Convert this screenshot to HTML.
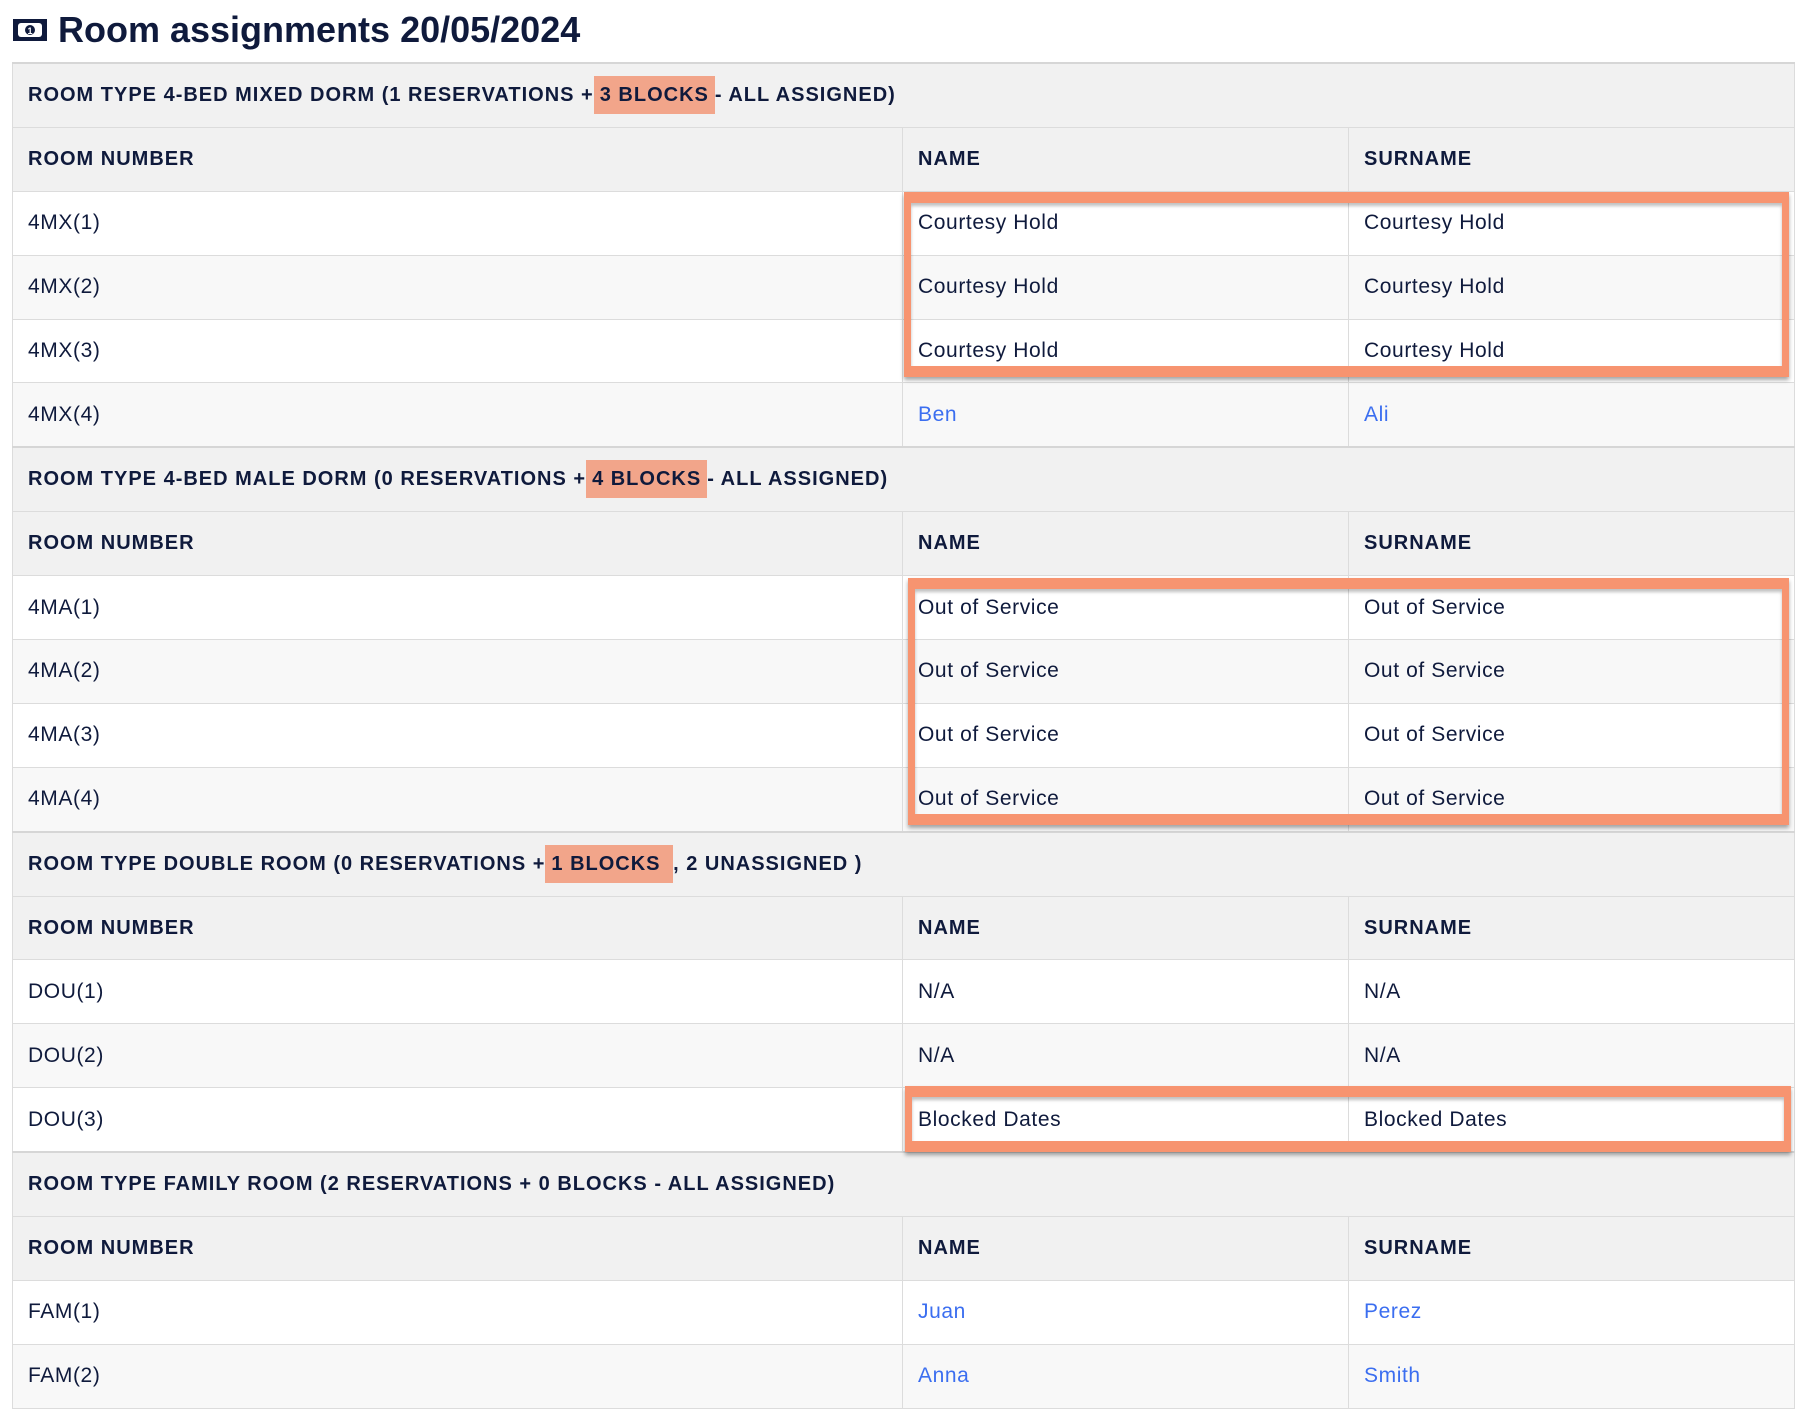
<!DOCTYPE html>
<html><head><meta charset="utf-8"><style>
body{margin:0;background:#fff;width:1806px;height:1420px;overflow:hidden;font-family:"Liberation Sans",sans-serif;color:#0f1a3c;position:relative}
h1{position:absolute;left:12px;top:8px;margin:0;font-size:36px;font-weight:bold;line-height:44px;display:flex;align-items:center;gap:10px}
table{position:absolute;left:12px;top:62px;width:1782px;border-collapse:collapse;table-layout:fixed}
td{height:62.9px;border:1px solid #dcdcdc;padding:0 0 0 15px;font-size:21px;letter-spacing:0.6px;vertical-align:middle}
tr.t td{background:#f1f1f1;font-weight:bold;font-size:20px;letter-spacing:1px;border-top:2px solid #d6d6d6}
tr.h td{background:#f1f1f1;font-weight:bold;font-size:20px;letter-spacing:1px}
tr.o td{background:#fff}tr.e td{background:#f8f8f8}
.hl{background:#f2a58a;padding:8px 6px}
a{color:#3b6ef0;text-decoration:none}
.box{position:absolute;border:solid #f79470;border-width:11px 7px 11px 7px;box-shadow:0 3px 4px rgba(0,0,0,.35),inset 0 3px 3px rgba(0,0,0,.25)}
</style></head><body>
<h1><svg width="36" height="26" viewBox="0 0 36 26"><rect x="1" y="2" width="34" height="22" fill="#0f1a3c"/><rect x="6" y="6" width="24" height="14" rx="3" fill="#fff"/><circle cx="18" cy="13" r="5" fill="#0f1a3c"/><text x="18" y="17" font-size="9" fill="#fff" text-anchor="middle" font-family="Liberation Sans" font-weight="bold">1</text></svg>Room assignments 20/05/2024</h1>
<table>
<colgroup><col style="width:890px"><col style="width:446px"><col style="width:446px"></colgroup>
<tr class="t"><td colspan="3">ROOM TYPE 4-BED MIXED DORM (1 RESERVATIONS +<span class="hl">3 BLOCKS</span>- ALL ASSIGNED)</td></tr>
<tr class="h"><td>ROOM NUMBER</td><td>NAME</td><td>SURNAME</td></tr>
<tr class="o"><td>4MX(1)</td><td>Courtesy Hold</td><td>Courtesy Hold</td></tr>
<tr class="e"><td>4MX(2)</td><td>Courtesy Hold</td><td>Courtesy Hold</td></tr>
<tr class="o"><td>4MX(3)</td><td>Courtesy Hold</td><td>Courtesy Hold</td></tr>
<tr class="e"><td>4MX(4)</td><td><a>Ben</a></td><td><a>Ali</a></td></tr>
<tr class="t"><td colspan="3">ROOM TYPE 4-BED MALE DORM (0 RESERVATIONS +<span class="hl">4 BLOCKS</span>- ALL ASSIGNED)</td></tr>
<tr class="h"><td>ROOM NUMBER</td><td>NAME</td><td>SURNAME</td></tr>
<tr class="o"><td>4MA(1)</td><td>Out of Service</td><td>Out of Service</td></tr>
<tr class="e"><td>4MA(2)</td><td>Out of Service</td><td>Out of Service</td></tr>
<tr class="o"><td>4MA(3)</td><td>Out of Service</td><td>Out of Service</td></tr>
<tr class="e"><td>4MA(4)</td><td>Out of Service</td><td>Out of Service</td></tr>
<tr class="t"><td colspan="3">ROOM TYPE DOUBLE ROOM (0 RESERVATIONS +<span class="hl">1 BLOCKS </span>, 2 UNASSIGNED )</td></tr>
<tr class="h"><td>ROOM NUMBER</td><td>NAME</td><td>SURNAME</td></tr>
<tr class="o"><td>DOU(1)</td><td>N/A</td><td>N/A</td></tr>
<tr class="e"><td>DOU(2)</td><td>N/A</td><td>N/A</td></tr>
<tr class="o"><td>DOU(3)</td><td>Blocked Dates</td><td>Blocked Dates</td></tr>
<tr class="t"><td colspan="3">ROOM TYPE FAMILY ROOM (2 RESERVATIONS + 0 BLOCKS - ALL ASSIGNED)</td></tr>
<tr class="h"><td>ROOM NUMBER</td><td>NAME</td><td>SURNAME</td></tr>
<tr class="o"><td>FAM(1)</td><td><a>Juan</a></td><td><a>Perez</a></td></tr>
<tr class="e"><td>FAM(2)</td><td><a>Anna</a></td><td><a>Smith</a></td></tr>
</table>
<div class="box" style="left:904px;top:192px;width:871px;height:163px"></div>
<div class="box" style="left:908px;top:578px;width:867px;height:225px"></div>
<div class="box" style="left:905px;top:1086px;width:872px;height:44px"></div>
</body></html>
